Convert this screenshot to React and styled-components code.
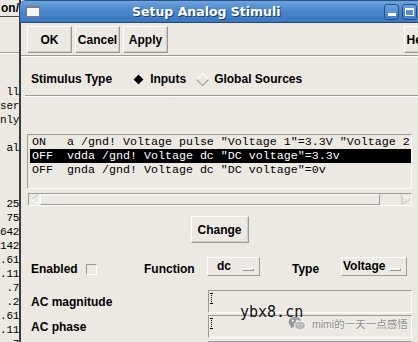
import React from 'react'
import styled, { createGlobalStyle } from 'styled-components'

const BG = '#ece9e3'
const SHADOW = '#9d9a94'

const Global = createGlobalStyle`
  html, body { margin: 0; padding: 0; background: ${BG}; }
  body { width: 418px; height: 342px; overflow: hidden; }
`

const Screen = styled.div`
  width: 418px;
  height: 342px;
  display: flex;
  align-items: flex-start;
  overflow: hidden;
  position: relative;
  background: ${BG};
  font-family: "Liberation Sans", Arial, sans-serif;
  color: #000;
`

/* ---- window behind the dialog ---- */
const BackWindow = styled.div`
  width: 19px;
  flex: none;
  display: flex;
  flex-direction: column;
  overflow: hidden;
`
const BackMenu = styled.div`
  height: 16px;
  display: flex;
  justify-content: flex-end;
  border-bottom: 1px solid #4d4a45;
  font-weight: bold;
  font-size: 12px;
  line-height: 16px;
  white-space: nowrap;
`
const BackRule = styled.div`
  margin-top: 35px;
  border-top: 1px solid ${SHADOW};
  border-bottom: 1px solid #fff;
`
const BackLines = styled.div`
  margin-top: 31px;
  display: flex;
  flex-direction: column;
  align-items: flex-end;
  font-family: "Liberation Mono", monospace;
  font-size: 11px;
  letter-spacing: -0.3px;
  line-height: 14px;
  white-space: pre;
`

/* ---- dialog ---- */
const Dialog = styled.div`
  flex: none;
  width: 397px;
  display: flex;
  flex-direction: column;
  border-left: 2px solid #3c3a37;
`
const TitleBar = styled.div`
  height: 21px;
  flex: none;
  display: flex;
  align-items: center;
  padding: 0 1px 0 6px;
  margin-left: -1px;
  background: linear-gradient(#6ea4df, #4a86cb 45%, #3c78bf);
  border-top: 1px solid #2c5586;
  border-bottom: 1px solid #24466f;
  border-top-left-radius: 6px;
`
const WinIcon = styled.div`
  width: 12px;
  height: 8px;
  background: #f4f4f4;
  border: 1px solid #7b7b7b;
  border-top-width: 2px;
`
const Title = styled.div`
  margin-left: 92px;
  font-family: "DejaVu Sans", sans-serif;
  font-weight: bold;
  font-size: 12.5px;
  color: #fff;
  text-shadow: 1px 1px 0 #1e3d66;
  white-space: nowrap;
`
const WinButtons = styled.div`
  margin-left: auto;
  display: flex;
  gap: 3px;
`
const WinButton = styled.div`
  width: 15px;
  height: 16px;
  border: 1px solid #26508a;
  border-radius: 3px;
  background: linear-gradient(#6aa2de, #3f7cc3);
  display: flex;
  align-items: ${p => (p.$min ? 'flex-end' : 'center')};
  justify-content: center;
  box-sizing: border-box;
  padding-bottom: ${p => (p.$min ? '3px' : '0')};
`
const MinGlyph = styled.div`
  width: 8px;
  height: 3px;
  background: #fff;
`
const MaxGlyph = styled.div`
  width: 9px;
  height: 8px;
  border: 1px solid #fff;
  border-top-width: 2px;
  box-sizing: border-box;
`

const ButtonRow = styled.div`
  display: flex;
  gap: 3px;
  padding: 3px 0 0 6px;
  flex: none;
`
const Button = styled.button`
  width: ${p => p.$w || 45}px;
  height: 27px;
  flex: none;
  padding: 0;
  margin: ${p => p.$m || 0};
  background: ${BG};
  font-family: "Liberation Sans", Arial, sans-serif;
  font-weight: bold;
  font-size: 12px;
  color: #000;
  border: 1px solid;
  border-color: #fff ${SHADOW} ${SHADOW} #fff;
  box-shadow: inset -1px -1px 0 #d2cfc9;
  align-self: ${p => (p.$center ? 'center' : 'auto')};
  text-align: center;
  white-space: nowrap;
  overflow: hidden;
`
const Groove = styled.div`
  flex: none;
  margin: ${p => p.$m};
  border-top: 1px solid ${SHADOW};
  border-bottom: 1px solid #fff;
`

const TypeRow = styled.div`
  height: 38px;
  box-sizing: border-box;
  padding: 6px 0 0 10px;
  display: flex;
  align-items: center;
  flex: none;
`
const Label = styled.div`
  font-weight: bold;
  font-size: 12px;
  line-height: 14px;
  white-space: nowrap;
  width: ${p => (p.$w ? `${p.$w}px` : 'auto')};
  margin-left: ${p => p.$ml || 0}px;
  flex: none;
`
const Radio = styled.div`
  display: flex;
  align-items: center;
  gap: 5px;
  margin-left: ${p => p.$ml}px;
  font-weight: bold;
  font-size: 12px;
`

const ListBox = styled.div`
  margin: 37px 6px 0 6px;
  height: 55px;
  flex: none;
  box-sizing: border-box;
  border: 1px solid;
  border-color: ${SHADOW} #fff #fff ${SHADOW};
  padding-left: 2px;
`
const ListClip = styled.div`
  height: 100%;
  overflow: hidden;
`
const ListRow = styled.div`
  height: 14px;
  line-height: 14px;
  padding-left: 2px;
  font-family: "Liberation Mono", monospace;
  font-size: 11.67px;
  white-space: pre;
  background: ${p => (p.$sel ? '#000' : 'transparent')};
  color: ${p => (p.$sel ? '#fff' : '#000')};
`

const ScrollBar = styled.div`
  margin: 4px 6px 0 7px;
  height: 13px;
  flex: none;
  box-sizing: border-box;
  display: flex;
  border: 1px solid;
  border-color: ${SHADOW} #fff #fff ${SHADOW};
`
const Arrow = styled.div`
  width: 11px;
  flex: none;
  display: flex;
  align-items: center;
  justify-content: center;
`
const Thumb = styled.div`
  width: 340px;
  flex: none;
  box-sizing: border-box;
  border: 1px solid;
  border-color: #fff ${SHADOW} ${SHADOW} #fff;
`
const Trough = styled.div`
  flex: 1;
`

const FieldRow = styled.div`
  display: flex;
  align-items: ${p => p.$align || 'center'};
  padding-left: 10px;
  margin-top: ${p => p.$mt}px;
  height: ${p => p.$h}px;
  flex: none;
`
const Check = styled.div`
  width: 11px;
  height: 11px;
  box-sizing: border-box;
  border: 1px solid;
  border-color: ${SHADOW} #fff #fff ${SHADOW};
  margin-bottom: 1px;
  flex: none;
`
const MenuButton = styled.div`
  width: ${p => p.$w}px;
  height: 19px;
  box-sizing: border-box;
  flex: none;
  display: flex;
  align-items: flex-start;
  padding: 1px 5px 0 ${p => p.$pl}px;
  border: 1px solid;
  border-color: #fff ${SHADOW} ${SHADOW} #fff;
  font-weight: bold;
  font-size: 12px;
  line-height: 14px;
`
const Indicator = styled.div`
  margin: 9px 0 0 auto;
  width: 12px;
  height: 3px;
  box-sizing: border-box;
  border: 1px solid;
  border-color: #fff ${SHADOW} ${SHADOW} #fff;
`
const Entry = styled.div`
  width: 204px;
  height: 23px;
  box-sizing: border-box;
  flex: none;
  border: 1px solid;
  border-color: ${SHADOW} #fff #fff ${SHADOW};
  padding: 2px 0 0 1px;
`
const Cursor = styled.div`
  position: relative;
  width: 3px;
  height: 11px;
  &::before {
    content: '';
    position: absolute;
    left: 1px;
    top: 0;
    height: 11px;
    border-left: 1px dotted #000;
  }
  &::after {
    content: '';
    position: absolute;
    left: 0;
    top: 0;
    width: 3px;
    height: 9px;
    border-top: 1px solid #000;
    border-bottom: 1px solid #000;
  }
`

/* ---- watermark over the page ---- */
const Watermark = styled.div`
  position: absolute;
  left: 240px;
  top: 303px;
  font-family: "DejaVu Sans Mono", monospace;
  font-size: 15px;
  color: #111;
`
const Credit = styled.div`
  position: absolute;
  left: 288px;
  top: 316px;
  display: flex;
  align-items: center;
  gap: 6px;
  font-family: "Liberation Sans", "Noto Sans CJK SC", sans-serif;
  font-size: 10.5px;
  color: #8c8c8c;
  text-shadow: 0 0 2px #fff;
  white-space: nowrap;
`

const Diamond = ({ on }) => (
  <svg width="13" height="13" viewBox="0 0 13 13">
    {on ? (
      <>
        <polygon points="6.5,0.5 12.5,6.5 6.5,12.5 0.5,6.5" fill="#fff" />
        <polygon points="6.5,1.5 11.5,6.5 6.5,11.5 1.5,6.5" fill="#000" />
      </>
    ) : (
      <>
        <polyline points="0.5,6.5 6.5,0.5 12.5,6.5" fill="none" stroke="#fff" strokeWidth="1.2" />
        <polyline points="0.5,6.5 6.5,12.5 12.5,6.5" fill="none" stroke="#a9a6a0" strokeWidth="1.2" />
      </>
    )}
  </svg>
)

const Tri = ({ dir }) => (
  <svg width="10" height="11" viewBox="0 0 10 11">
    {dir === 'left' ? (
      <>
        <polyline points="9,0.5 1,5.5" fill="none" stroke="#c4c1bb" />
        <polyline points="1,5.5 9,10.5 9,0.5" fill="none" stroke="#fff" />
      </>
    ) : (
      <>
        <polyline points="1,0.5 9,5.5" fill="none" stroke="#fff" />
        <polyline points="1,0.5 1,10.5 9,5.5" fill="none" stroke="#c4c1bb" />
      </>
    )}
  </svg>
)

const WeChat = () => (
  <svg width="18" height="15" viewBox="0 0 18 15">
    <ellipse cx="7" cy="6" rx="6.5" ry="5.3" fill="#9a9a9a" />
    <polygon points="3,9.5 2.5,12.5 6,10.8" fill="#9a9a9a" />
    <ellipse cx="12" cy="9.5" rx="5.5" ry="4.5" fill="#b8b8b8" stroke="#fff" strokeWidth="1" />
    <circle cx="4.8" cy="4.5" r="0.9" fill="#fff" />
    <circle cx="9" cy="4.5" r="0.9" fill="#fff" />
    <circle cx="10.3" cy="8.6" r="0.7" fill="#fff" />
    <circle cx="13.7" cy="8.6" r="0.7" fill="#fff" />
  </svg>
)

const backLines = ['ll', 'ser', 'nly', ' ', 'al', ' ', ' ', ' ', '25', '75', '642', '142', '.61', '.11', '.7', '.2', '.61', '.11', '.7']

const rows = [
  { text: 'ON   a /gnd! Voltage pulse "Voltage 1"=3.3V "Voltage 2"=0V' },
  { text: 'OFF  vdda /gnd! Voltage dc "DC voltage"=3.3v', sel: true },
  { text: 'OFF  gnda /gnd! Voltage dc "DC voltage"=0v' },
]

export default function App() {
  return (
    <Screen>
      <Global />
      <BackWindow>
        <BackMenu><span>on/</span></BackMenu>
        <BackRule />
        <BackLines>
          {backLines.map((l, i) => <span key={i}>{l}</span>)}
        </BackLines>
      </BackWindow>

      <Dialog>
        <TitleBar>
          <WinIcon />
          <Title>Setup Analog Stimuli</Title>
          <WinButtons>
            <WinButton $min><MinGlyph /></WinButton>
            <WinButton><MaxGlyph /></WinButton>
          </WinButtons>
        </TitleBar>

        <ButtonRow>
          <Button>OK</Button>
          <Button>Cancel</Button>
          <Button>Apply</Button>
          <Button $w={31} $m="0 0 0 233px">Help</Button>
        </ButtonRow>
        <Groove $m="2px 0 0 0" />

        <TypeRow>
          <Label>Stimulus Type</Label>
          <Radio $ml={20}><Diamond on /> Inputs</Radio>
          <Radio $ml={10}><Diamond /> Global Sources</Radio>
        </TypeRow>
        <Groove $m="0 0 0 4px" />

        <ListBox>
          <ListClip>
            {rows.map((r, i) => (
              <ListRow key={i} $sel={r.sel}>{r.text}</ListRow>
            ))}
          </ListClip>
        </ListBox>

        <ScrollBar>
          <Arrow><Tri dir="left" /></Arrow>
          <Thumb />
          <Trough />
          <Arrow><Tri dir="right" /></Arrow>
        </ScrollBar>

        <Button $w={58} $center $m="10px 0 0 0">Change</Button>

        <FieldRow $mt={14} $h={19} $align="flex-end">
          <Label $w={55}>Enabled</Label>
          <Check />
          <Label $ml={47} $w={63}>Function</Label>
          <MenuButton $w={53} $pl={9}>dc<Indicator /></MenuButton>
          <Label $ml={32} $w={49}>Type</Label>
          <MenuButton $w={66} $pl={1}>Voltage<Indicator /></MenuButton>
        </FieldRow>

        <FieldRow $mt={14} $h={23}>
          <Label $w={177}>AC magnitude</Label>
          <Entry><Cursor /></Entry>
        </FieldRow>
        <FieldRow $mt={2} $h={23}>
          <Label $w={177}>AC phase</Label>
          <Entry><Cursor /></Entry>
        </FieldRow>
        <FieldRow $mt={3} $h={23}>
          <Label $w={177}>DC voltage</Label>
          <Entry><Cursor /></Entry>
        </FieldRow>
      </Dialog>

      <Watermark>ybx8.cn</Watermark>
      <Credit><WeChat />mimi的一天一点感悟</Credit>
    </Screen>
  )
}
